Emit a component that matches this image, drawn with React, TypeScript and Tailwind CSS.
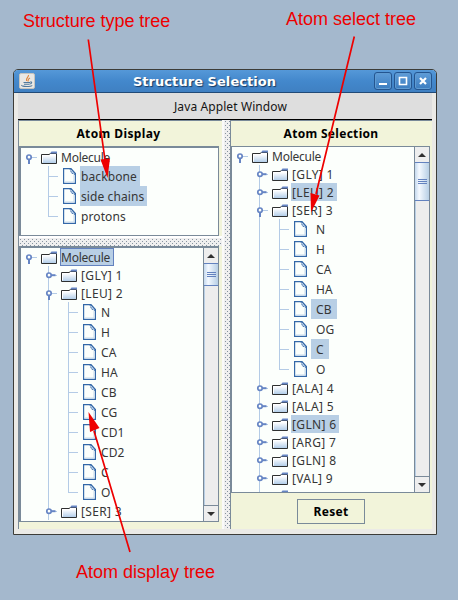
import React from 'react';

type Node = { label: string; level: number; kind: 'open' | 'closed' | 'leaf'; selected?: boolean; focus?: boolean; last?: boolean; pad?: boolean };

function Row({ n }: { n: Node }) {
  const leaf = n.kind === 'leaf';
  const h = leaf ? 20 : 18;
  const o = n.level * 20;
  const w = o + 39;
  const guides = [];
  for (let l = 1; l <= n.level; l++) {
    const own = l === n.level;
    guides.push(<rect key={l} x={7 + l * 20} y="0" width="1" height={own && n.last ? h / 2 + 1 : h} fill="#b4cbe6" />);
  }
  const tracking = leaf ? 'tracking-[0.1px]' : n.level === 0 ? 'tracking-[-0.25px]' : 'tracking-[0.35px]';
  return (
    <div className={`flex shrink-0 ${leaf ? 'h-5' : 'h-[18px]'}`}>
      <svg width={w} height={h} viewBox={`0 0 ${w} ${h}`} className="shrink-0" shapeRendering="crispEdges">
        {guides}
        {leaf ? (
          <g>
            <rect x={o + 7} y="10" width="10" height="1" fill="#b4cbe6" />
            <g transform={`translate(${o + 22},2)`} shapeRendering="auto">
              <path d="M.6 .6H8L12.4 5.5V15.4H.6Z" fill="#fcfffc" stroke="#3468a8" strokeWidth="1.2" />
              <path d="M2 14H11V7" fill="none" stroke="#c7daed" />
              <path d="M7 1L8.5 5L12 6.5" fill="#b9d0ea" stroke="#3468a8" strokeWidth=".9" strokeDasharray="1.5 .7" />
              <path d="M7.5 .5L12.5 6" stroke="#3468a8" />
            </g>
          </g>
        ) : (
          <g>
            <rect x={o + 10} y="9" width="6" height="1" fill="#b4cbe6" />
            <g shapeRendering="auto">
              {n.kind === 'open' ? (
                <rect x={o + 7} y="11" width="2" height="5" fill="#6685c4" />
              ) : (
                <rect x={o + 10} y="8.2" width="4.5" height="2" fill="#6685c4" />
              )}
              <circle cx={o + 8} cy="9.2" r="2.2" fill="#fcfffc" stroke="#6685c4" strokeWidth="1.7" />
              <g transform={`translate(${o + 20},3)`}>
                <path d="M.5 12.5V3.5H8L9.5 2.5H15.5V12.5Z" fill="url(#folder)" stroke="#2e3030" />
                <path d="M9 2.5L10.5 .5H16V2.5Z" fill="#6685c4" />
                <path d="M1.5 11.5V4.5H9" stroke="#fff" fill="none" />
              </g>
            </g>
          </g>
        )}
      </svg>
      <span
        className={`block whitespace-nowrap text-[12px] text-[#363636] ${tracking} ${leaf ? 'pt-px leading-[19px]' : n.focus ? 'leading-[17px]' : 'pt-px leading-[18px]'} ${n.pad ? 'px-[5px]' : n.focus ? 'pr-[3px]' : 'pl-px pr-[3px]'} ${n.selected ? 'bg-[#b8cfe5]' : ''} ${n.focus ? 'border border-[#6382bf]' : ''}`}
      >
        {n.label}
      </span>
    </div>
  );
}

const types: Node[] = [
  { label: 'Molecule', level: 0, kind: 'open' },
  { label: 'backbone', level: 1, kind: 'leaf', selected: true },
  { label: 'side chains', level: 1, kind: 'leaf', selected: true },
  { label: 'protons', level: 1, kind: 'leaf', last: true },
];

const displayAtoms = ['N', 'H', 'CA', 'HA', 'CB', 'CG', 'CD1', 'CD2', 'C', 'O'];
const display: Node[] = [
  { label: 'Molecule', level: 0, kind: 'open', selected: true, focus: true },
  { label: '[GLY] 1', level: 1, kind: 'closed' },
  { label: '[LEU] 2', level: 1, kind: 'open' },
  ...displayAtoms.map((label, i): Node => ({ label, level: 2, kind: 'leaf', last: i === displayAtoms.length - 1 })),
  { label: '[SER] 3', level: 1, kind: 'closed' },
];

const selectAtoms = ['N', 'H', 'CA', 'HA', 'CB', 'OG', 'C', 'O'];
const selection: Node[] = [
  { label: 'Molecule', level: 0, kind: 'open' },
  { label: '[GLY] 1', level: 1, kind: 'closed' },
  { label: '[LEU] 2', level: 1, kind: 'closed', selected: true },
  { label: '[SER] 3', level: 1, kind: 'open' },
  ...selectAtoms.map((label, i): Node => ({ label, level: 2, kind: 'leaf', pad: true, selected: label === 'CB' || label === 'C', last: i === selectAtoms.length - 1 })),
  { label: '[ALA] 4', level: 1, kind: 'closed' },
  { label: '[ALA] 5', level: 1, kind: 'closed' },
  { label: '[GLN] 6', level: 1, kind: 'closed', selected: true },
  { label: '[ARG] 7', level: 1, kind: 'closed' },
  { label: '[GLN] 8', level: 1, kind: 'closed' },
  { label: '[VAL] 9', level: 1, kind: 'closed' },
  { label: '', level: 1, kind: 'closed' },
];

function Tree({ nodes }: { nodes: Node[] }) {
  return (
    <div className="flex min-w-0 flex-1 flex-col overflow-hidden bg-[#fcfffc]">
      {nodes.map((n, i) => <Row key={i} n={n} />)}
    </div>
  );
}

function ScrollBar({ thumb }: { thumb: string }) {
  return (
    <div className="flex w-[15px] shrink-0 flex-col border-l border-[#7a8a99] bg-[#eeeeee]">
      <div className="flex h-[15px] shrink-0 items-center justify-center">
        <svg width="8" height="4" viewBox="0 0 8 4"><path d="M4 0L8 4H0Z" fill="#303030" /></svg>
      </div>
      <div className={`flex shrink-0 flex-col items-center justify-center gap-px border-y border-[#6382bf] bg-linear-to-r from-[#c5d9ee] via-[#f4f9ff] via-30% to-[#b8cfe5] ${thumb}`}>
        <div className="h-px w-[9px] bg-[#6382bf]" />
        <div className="h-px w-[9px] bg-[#6382bf]" />
        <div className="h-px w-[9px] bg-[#6382bf]" />
      </div>
      <div className="flex-1 border-l border-[#b8cfe5] bg-[#ededed]" />
      <div className="flex h-4 shrink-0 items-center justify-center border-t border-[#7a8a99]">
        <svg width="8" height="4" viewBox="0 0 8 4"><path d="M0 0H8L4 4Z" fill="#303030" /></svg>
      </div>
    </div>
  );
}

function Dots({ id }: { id: string }) {
  return (
    <svg className="block h-full w-full" shapeRendering="crispEdges">
      <defs>
        <pattern id={id} width="4" height="4" patternUnits="userSpaceOnUse">
          <rect x="1" y="1" width="1" height="1" fill="#8793a0" />
          <rect x="3" y="3" width="1" height="1" fill="#8793a0" />
        </pattern>
      </defs>
      <rect width="100%" height="100%" fill={`url(#${id})`} />
    </svg>
  );
}

function WinButton({ children }: { children: React.ReactNode }) {
  return (
    <div className="flex h-[18px] w-[18px] items-center justify-center rounded-[3px] border border-[#245590] bg-linear-to-b from-[#5e9cd8] to-[#3c7dc0] shadow-[inset_0_0_0_1px_#5f9bd2]">
      <svg width="10" height="10" viewBox="0 0 10 10" fill="none" stroke="white">{children}</svg>
    </div>
  );
}

export default function App() {
  return (
    <div className="relative h-[600px] w-[458px] overflow-hidden bg-[#a4b8cd] pl-[13px] pt-[69px] font-['Noto_Sans','Open_Sans',sans-serif]">
      <svg width="0" height="0" className="absolute">
        <defs>
          <linearGradient id="folder" x1="0" y1="0" x2="0" y2="1">
            <stop offset=".2" stopColor="#ffffff" />
            <stop offset="1" stopColor="#aecbe8" />
          </linearGradient>
        </defs>
      </svg>
      <div className="flex h-[466px] w-[424px] flex-col rounded-t-[5px] border border-[#3c3c38] bg-[#ebeae6]">
        <div className="flex h-[23px] shrink-0 items-center rounded-t-[4px] border-b border-[#214a77] bg-linear-to-b from-[#5598d8] via-[#4388cc] to-[#3f80c2] pl-[5px] pr-1">
          <div className="flex h-4 w-4 items-center justify-center rounded-[2px] border border-[#c7c4bd] bg-[#e9e8e5]">
            <svg width="14" height="14" viewBox="0 0 14 14" fill="none">
              <path d="M8.5 1C9 3 5.5 4 6.5 7M10 4C7 5.5 9 6 7.7 7.5" stroke="#df8840" strokeWidth="1.2" />
              <path d="M3.5 8.5H10M4 10.2H9.5M10 8C12.5 7.5 12 9.8 9.7 10M1.5 11C1 13 12 13 12 11.3" stroke="#50799d" strokeWidth="1.1" />
            </svg>
          </div>
          <div className="flex-1 pt-[2px] text-center font-['DejaVu_Sans'] text-[13px] font-bold leading-5 tracking-[0.05px] text-white [text-shadow:1px_1px_1px_#183a62]">Structure Selection</div>
          <div className="flex gap-[2px]">
            <WinButton><path d="M1 8H9" strokeWidth="2" /></WinButton>
            <WinButton><path d="M1.5 1.5H8.5V8.5H1.5Z" strokeWidth="1.6" /></WinButton>
            <WinButton><path d="M2 2L8 8M8 2L2 8" strokeWidth="2.2" /></WinButton>
          </div>
        </div>
        <div className="mx-1 flex h-[27px] shrink-0 items-center justify-center border-b border-black bg-[#dedede] pl-[11px] pt-px text-[12px] tracking-[0.1px] text-[#151515]">
          Java Applet Window
        </div>
        <div className="mx-1 flex h-[409px]">
          <div className="flex w-[204px] flex-col border-l border-t border-[#7a8a99] bg-[#f2f4da]">
            <div className="flex h-[25px] shrink-0 items-center justify-center pr-1 pt-px text-[12px] font-bold tracking-[0.4px] text-black">Atom Display</div>
            <div className="flex h-[90px] w-[200px] shrink-0 border border-l-2 border-t-2 border-[#7a8a99]"><Tree nodes={types} /></div>
            <div className="h-[10px] shrink-0 border-t-2 border-white bg-[#efefef]"><Dots id="dots-h" /></div>
            <div className="flex h-[276px] w-[200px] shrink-0 border border-l-2 border-t-2 border-[#7a8a99]">
              <Tree nodes={display} />
              <ScrollBar thumb="h-[23px]" />
            </div>
          </div>
          <div className="w-2 border-l-2 border-[#fafafa] bg-[#efefef]"><Dots id="dots-v" /></div>
          <div className="flex flex-1 flex-col border-l border-t border-[#7a8a99] bg-[#f2f4da]">
            <div className="flex h-[25px] shrink-0 items-center justify-center pr-px pt-px text-[12px] font-bold tracking-[0.3px] text-black">Atom Selection</div>
            <div className="flex h-[347px] w-[199px] shrink-0 border border-[#7a8a99]">
              <Tree nodes={selection} />
              <ScrollBar thumb="h-[39px]" />
            </div>
            <div className="flex flex-1 items-center justify-center pr-px">
              <button className="h-[25px] w-[68px] border border-[#7a8a99] pt-px text-[12px] font-bold leading-none tracking-[0.3px] text-black">Reset</button>
            </div>
          </div>
        </div>
      </div>
      <div className="absolute left-[23px] top-[10px] whitespace-nowrap font-['Liberation_Sans'] text-[18px] leading-[22px] tracking-[-0.05px] text-[#ee0000]">Structure type tree</div>
      <div className="absolute left-[286px] top-[8px] whitespace-nowrap font-['Liberation_Sans'] text-[18px] leading-[22px] text-[#ee0000]">Atom select tree</div>
      <div className="absolute left-[76px] top-[561px] whitespace-nowrap font-['Liberation_Sans'] text-[18px] leading-[22px] text-[#ee0000]">Atom display tree</div>
      <svg className="absolute left-0 top-0" width="458" height="600" viewBox="0 0 458 600" stroke="#ee0000" strokeWidth="1.7" fill="#ee0000">
        <path d="M88.3 39.5L105 160M354.3 36.5L316 194M130 552L94 431" />
        <path stroke="none" d="M107.5 178L100.5 159.5L110 158.5ZM311 212.5L310.5 193L319.5 195.5ZM88.5 412L99.5 428L90 432Z" />
      </svg>
    </div>
  );
}
